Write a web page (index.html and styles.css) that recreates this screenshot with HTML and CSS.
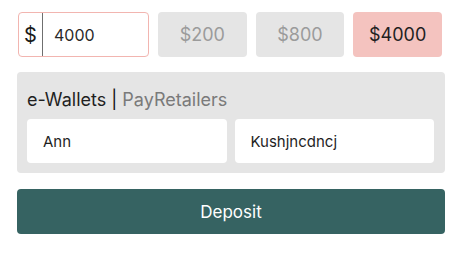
FILE: index.html
```html
<!DOCTYPE html>
<html>
<head>
<meta charset="utf-8">
<link rel="stylesheet" href="styles.css">
</head>
<body>
<div class="page">
  <div class="amounts">
    <div class="amount-input">
      <span class="currency">$</span>
      <span class="value">4000</span>
    </div>
    <div class="preset">$200</div>
    <div class="preset">$800</div>
    <div class="preset active">$4000</div>
  </div>
  <div class="method">
    <div class="method-title"><span class="cat">e-Wallets</span> <span class="sep">|</span> <span class="provider">PayRetailers</span></div>
    <div class="fields">
      <div class="field">Ann</div>
      <div class="field">Kushjncdncj</div>
    </div>
  </div>
  <div class="deposit">Deposit</div>
</div>
</body>
</html>
```
FILE: styles.css
```css
html, body {
  margin: 0;
  padding: 0;
  background: #ffffff;
}
body {
  font-family: Inter, "Noto Sans", sans-serif;
  color: #1f1f1f;
}
.page {
  padding: 12px 21px 0 17px;
  width: 428px;
}
.amounts {
  display: flex;
  gap: 9px;
  margin: 0 3px 0 1px;
  height: 45px;
}
.amount-input {
  width: 131px;
  box-sizing: border-box;
  border: 1px solid #f2b5b0;
  border-radius: 4px;
  display: flex;
  align-items: center;
  background: #fff;
}
.currency {
  width: 24px;
  height: 100%;
  box-sizing: border-box;
  border-right: 1px solid #6f6f6f;
  font-size: 20px;
  display: flex;
  align-items: center;
  justify-content: center;
  color: #1a1a1a;
}
.value {
  padding-left: 11px;
  font-size: 16px;
  color: #2a2a2a;
}
.preset {
  flex: 1;
  background: #e5e5e5;
  border-radius: 4px;
  display: flex;
  align-items: center;
  justify-content: center;
  font-size: 18px;
  color: #9b9b9b;
}
.preset.active {
  background: #f4c3bf;
  color: #1f1f1f;
}
.method {
  margin-top: 15px;
  background: #e5e5e5;
  border-radius: 4px;
  padding: 16px 11px 10px 10px;
}
.method-title {
  font-size: 18px;
  line-height: 24px;
  margin-bottom: 7px;
  color: #1f1f1f;
}
.sep {
  color: #111;
}
.provider {
  color: #7a7a7a;
}
.fields {
  display: flex;
  gap: 8px;
}
.field {
  flex: 1;
  height: 44px;
  background: #fff;
  border-radius: 4px;
  display: flex;
  align-items: center;
  padding-left: 16px;
  font-size: 15px;
  color: #1f1f1f;
}
.deposit {
  margin-top: 16px;
  height: 45px;
  background: #366362;
  border-radius: 4px;
  color: #fff;
  font-size: 17px;
  display: flex;
  align-items: center;
  justify-content: center;
}
```
